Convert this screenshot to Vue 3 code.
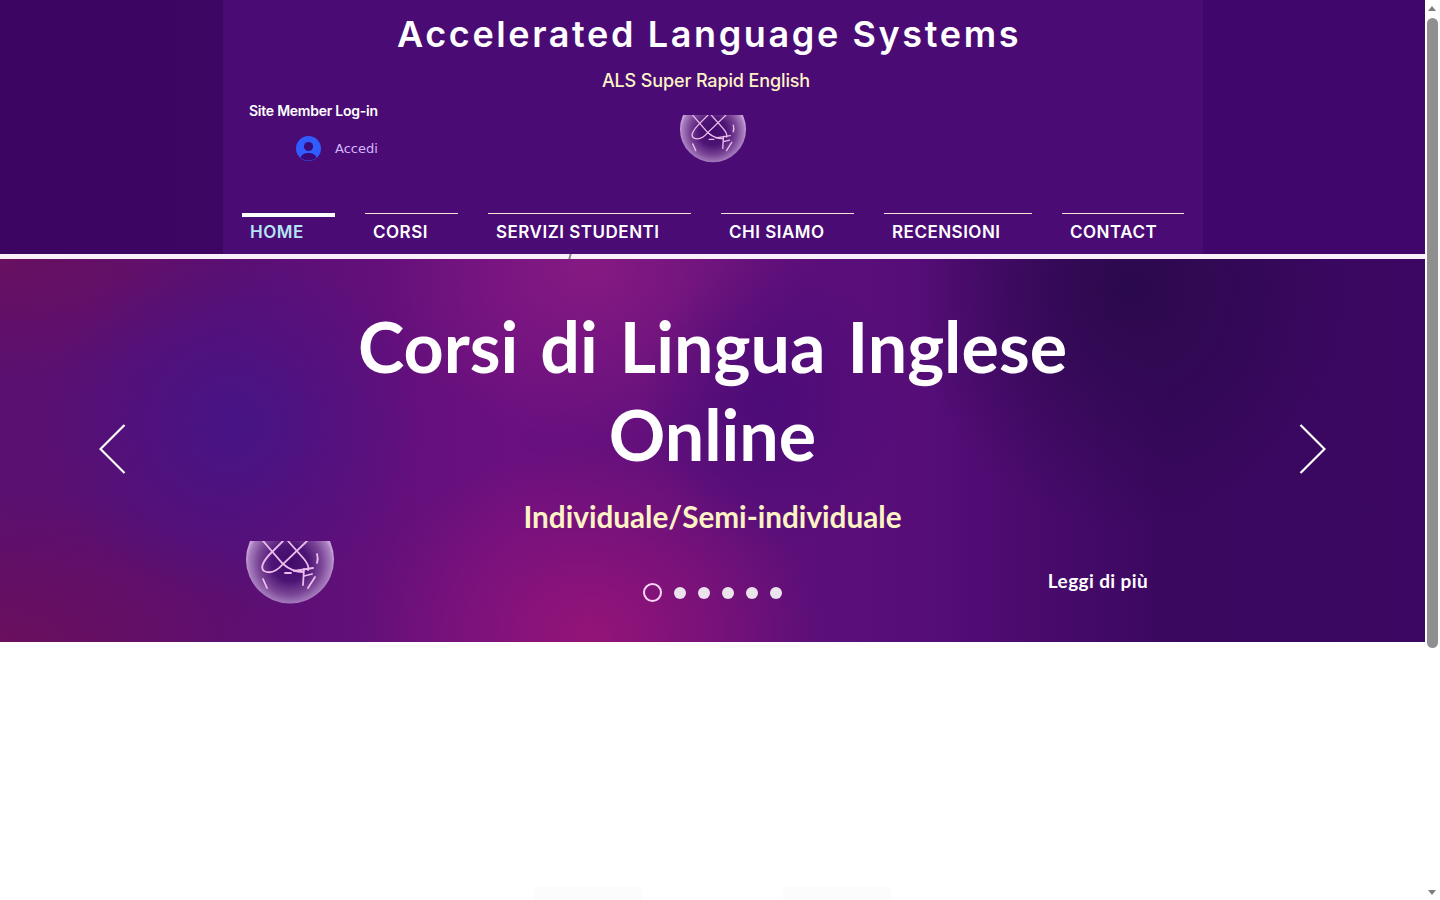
<script setup>
const navItems = [
  { label: 'HOME', active: true },
  { label: 'CORSI' },
  { label: 'SERVIZI STUDENTI' },
  { label: 'CHI SIAMO' },
  { label: 'RECENSIONI' },
  { label: 'CONTACT' }
]
const dots = [1, 2, 3, 4, 5]
</script>

<template>
  <div class="shell">
    <div class="page">
      <svg class="defs" width="0" height="0" aria-hidden="true">
        <defs>
          <radialGradient id="sphere" gradientUnits="userSpaceOnUse" cx="44" cy="22" r="44">
            <stop offset="0" stop-color="#420a6a" />
            <stop offset="0.42" stop-color="#4d1475" />
            <stop offset="0.72" stop-color="#7a4696" />
            <stop offset="0.94" stop-color="#a97fc0" />
            <stop offset="1" stop-color="#c8a4d6" />
          </radialGradient>
          <symbol id="als-logo" viewBox="0 0 88 63">
            <circle cx="44" cy="18.500" r="44" fill="url(#sphere)" />
            <g fill="none" stroke="#eebcec" stroke-width="1.800" stroke-linecap="round">
              <path d="M17 0L37 23C44 29 50 31 57 31" />
              <path d="M37 0L25 12C17 20 14 27 18 30C24 33 31 30 37 23L61 0" />
              <path d="M42 0L58 18C62 23 63 27 62 29" />
              <path d="M71 13C72 16 72 19 71 22" />
              <path d="M17 38L21 47" />
              <path d="M69 36L62 47" />
              <path d="M48 30L67 27" />
              <path d="M58 28L57 44" />
              <path d="M58 35L66 33" />
              <path d="M39 32H45" />
            </g>
          </symbol>
        </defs>
      </svg>

      <header class="site-header">
        <div class="panel">
          <h1 class="brand">Accelerated Language Systems</h1>
          <p class="tagline">ALS Super Rapid English</p>
          <div class="mid-row">
            <div class="login">
              <p class="login-title">Site Member Log-in</p>
              <div class="login-action">
                <svg class="avatar" viewBox="0 0 25 25" width="25" height="25">
                  <circle cx="12.500" cy="12.500" r="12.500" fill="#2f5dff" />
                  <circle cx="12.500" cy="10.500" r="4.600" fill="#3b0a78" />
                  <path d="M4.500 21.500c1.500-3.500 4.500-4.500 8-4.500s6.500 1 8 4.500c-2.200 2-5 3-8 3s-5.800-1-8-3Z" fill="#3b0a78" />
                </svg>
                <span class="accedi">Accedi</span>
              </div>
            </div>
            <svg class="logo logo-small"><use href="#als-logo" /></svg>
          </div>
          <nav class="nav">
            <a v-for="item in navItems" :key="item.label" class="nav-item" :class="{ active: item.active }">{{ item.label }}</a>
          </nav>
        </div>
      </header>

      <div class="strip"><span class="strip-mark"></span></div>

      <section class="hero">
        <svg class="arrow arrow-left" viewBox="0 0 27 50" width="27" height="50">
          <path d="M25.500 1L1.500 25L25.500 49" fill="none" stroke="#fff" stroke-width="2.200" />
        </svg>
        <svg class="arrow arrow-right" viewBox="0 0 27 50" width="27" height="50">
          <path d="M1.500 1L25.500 25L1.500 49" fill="none" stroke="#fff" stroke-width="2.200" />
        </svg>
        <h2 class="hero-title">Corsi di Lingua Inglese<br />Online</h2>
        <p class="hero-sub">Individuale/Semi-individuale</p>
        <div class="hero-bottom">
          <svg class="logo logo-large"><use href="#als-logo" /></svg>
          <div class="dots">
            <span class="dot-current"></span>
            <span v-for="d in dots" :key="d" class="dot"></span>
          </div>
          <span class="more">Leggi di più</span>
        </div>
      </section>

      <section class="below">
        <div class="smudges">
          <span class="smudge"></span>
          <span class="smudge"></span>
        </div>
      </section>
    </div>

    <aside class="scrollbar">
      <span class="sb-up"></span>
      <span class="sb-thumb"></span>
      <span class="sb-down"></span>
    </aside>
  </div>
</template>

<style scoped>
.shell {
  display: flex;
  height: 900px;
  overflow: hidden;
  background: #fff;
}
.page {
  width: 1425px;
  flex: none;
  background: #fff;
}
.defs {
  display: block;
  height: 0;
}
.scrollbar {
  position: relative;
  width: 15px;
  flex: none;
  background: #fff;
}
.sb-up,
.sb-down {
  position: absolute;
  left: 3px;
  width: 0;
  height: 0;
  border-left: 4.500px solid transparent;
  border-right: 4.500px solid transparent;
}
.sb-up {
  top: 6px;
  border-bottom: 5px solid #7d7d7d;
}
.sb-down {
  bottom: 5px;
  border-top: 5px solid #7d7d7d;
}
.sb-thumb {
  position: absolute;
  left: 2px;
  top: 18px;
  width: 11px;
  height: 630px;
  border-radius: 6px;
  background: #8f8f8f;
}
.site-header {
  background: linear-gradient(90deg, #3d0562 0%, #41066a 100%);
  height: 254px;
}
.panel {
  width: 980px;
  height: 254px;
  margin: 0 222px 0 223px;
  box-sizing: border-box;
  background: #4a0b75;
  padding-top: 11px;
  display: flex;
  flex-direction: column;
}
.brand {
  margin: 0 0 0 -8px;
  font: 600 36px/46px Inter, sans-serif;
  letter-spacing: 2.620px;
  color: #fff;
  text-align: center;
  white-space: nowrap;
}
.tagline {
  margin: 12px 14px 0 0;
  font: 500 18px/24px Inter, sans-serif;
  letter-spacing: -0.130px;
  color: #fdf3c4;
  text-align: center;
}
.mid-row {
  position: relative;
  margin-top: 9px;
  height: 111px;
}
.login {
  padding-left: 26px;
}
.login-title {
  margin: -1px 0 0;
  font: 600 14px/20px Inter, sans-serif;
  letter-spacing: -0.250px;
  color: #fff;
}
.login-action {
  display: flex;
  align-items: center;
  margin-top: 15px;
  margin-left: 47px;
}
.avatar {
  display: block;
  flex: none;
}
.accedi {
  margin-left: 14px;
  font: 13px/20px "DejaVu Sans", sans-serif;
  color: #d3b8ff;
}
.logo {
  display: block;
}
.logo-small {
  position: absolute;
  left: 457px;
  top: 13px;
  width: 66px;
  height: 48px;
}
.nav {
  display: grid;
  grid-template-columns: 93px 93px 203px 133px 148px 122px;
  column-gap: 30px;
  padding-left: 19px;
}
.nav-item {
  display: block;
  box-sizing: border-box;
  height: 41px;
  padding: 8px 0 0 8px;
  border-top: 1px solid #fbe3d6;
  font: 600 17px/21px Inter, sans-serif;
  letter-spacing: 0.5px;
  color: #fff;
  white-space: nowrap;
}
.nav-item.active {
  border-top: 4px solid #fff;
  padding-top: 5px;
  color: #b6e4f5;
}
.strip {
  position: relative;
  height: 5px;
  background: #faf0fa;
}
.strip-mark {
  position: absolute;
  left: 569px;
  top: 0;
  width: 2px;
  height: 5px;
  background: #8a8090;
  transform: skewX(-15deg);
}
.hero {
  position: relative;
  height: 383px;
  box-sizing: border-box;
  padding-top: 43px;
  color: #fff;
  text-align: center;
  background:
    radial-gradient(ellipse 130px 150px at 770px 145px, rgba(74, 11, 120, 0.9), rgba(74, 11, 120, 0) 100%),
    radial-gradient(ellipse 230px 190px at 590px 375px, rgba(150, 20, 120, 0.95), rgba(150, 20, 120, 0) 100%),
    radial-gradient(ellipse 210px 170px at 590px 10px, rgba(135, 26, 130, 0.95), rgba(135, 26, 130, 0) 100%),
    radial-gradient(ellipse 220px 240px at 1130px 30px, rgba(42, 9, 76, 0.95), rgba(42, 9, 76, 0) 100%),
    radial-gradient(ellipse 190px 180px at 235px 165px, rgba(70, 20, 135, 0.95), rgba(70, 20, 135, 0) 100%),
    radial-gradient(ellipse 300px 150px at 0px 383px, rgba(110, 14, 88, 0.8), rgba(110, 14, 88, 0) 100%),
    radial-gradient(ellipse 280px 120px at 0px 0px, rgba(110, 16, 90, 0.7), rgba(110, 16, 90, 0) 100%),
    linear-gradient(90deg, #5a1070 0%, #5a0f74 16%, #6a1080 36%, #60107a 50%, #560d78 65%, #3a085f 82%, #3b0762 100%);
}
.hero-title {
  margin: 0;
  font: 700 70px/88px Lato, sans-serif;
  word-spacing: 5px;
}
.hero-sub {
  margin: 17px 0 0;
  font: 700 29.700px/44px Lato, sans-serif;
  color: #fdf3c4;
}
.hero-bottom {
  display: grid;
  grid-template-columns: 397px 139px 1fr;
  align-items: start;
  padding: 0 277px 0 246px;
  margin-top: 2px;
  height: 63px;
}
.logo-large {
  width: 88px;
  height: 63px;
}
.dots {
  display: flex;
  align-items: center;
  gap: 12px;
  margin-top: 42px;
}
.dot-current {
  flex: none;
  box-sizing: border-box;
  width: 19px;
  height: 19px;
  border: 2px solid #fbd5f5;
  border-radius: 50%;
}
.dot {
  flex: none;
  width: 12px;
  height: 12px;
  border-radius: 50%;
  background: #ece4ec;
}
.more {
  justify-self: end;
  margin-top: 29px;
  font: 700 19px/22px Lato, sans-serif;
  letter-spacing: 0.380px;
  color: #fff;
}
.arrow {
  position: absolute;
  top: 165px;
}
.arrow-left {
  left: 99px;
}
.arrow-right {
  right: 99px;
}
.below {
  padding-top: 245px;
}
.smudges {
  display: flex;
  justify-content: center;
  gap: 141px;
}
.smudge {
  width: 108px;
  height: 13px;
  background: #fcfcfc;
}
</style>

<style>
html, body {
  margin: 0;
  padding: 0;
  overflow: hidden;
}
</style>
